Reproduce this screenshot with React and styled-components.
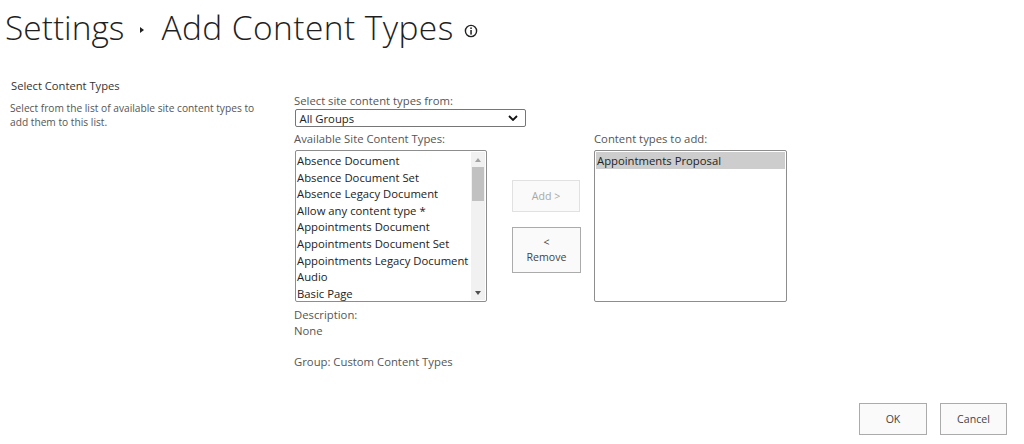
import styled, { createGlobalStyle } from "styled-components";

const GlobalStyle = createGlobalStyle`
  html, body {
    margin: 0;
    padding: 0;
    background: #fff;
  }
  body {
    font-family: 'Open Sans', 'Noto Sans', sans-serif;
  }
`;

const Page = styled.div`
  width: 1024px;
  height: 444px;
  overflow: hidden;
  display: flex;
  flex-direction: column;
  color: #444;
`;

const TitleRow = styled.div`
  height: 60px;
  padding: 0 0 6px 5px;
  box-sizing: border-box;
  display: flex;
  align-items: center;
  font-weight: 300;
  font-size: 33.5px;
  color: #1f1f1f;
  white-space: nowrap;
`;

const TitleLast = styled.span`
  letter-spacing: 0.42px;
`;

const Arrow = styled.span`
  width: 0;
  height: 0;
  margin: 5px 17px 0 16px;
  border-left: 4px solid #222;
  border-top: 3.5px solid transparent;
  border-bottom: 3.5px solid transparent;
`;

const InfoIcon = styled.svg`
  width: 14px;
  height: 14px;
  margin: 8px 0 0 10px;
`;

const FormRow = styled.div`
  flex: 1;
  display: flex;
`;

const Intro = styled.div`
  width: 254px;
  margin-left: 10px;
  padding-top: 18px;
`;

const IntroTitle = styled.div`
  font-size: 11.2px;
  line-height: 15px;
  color: #333;
  padding-left: 1px;
`;

const IntroText = styled.div`
  margin-top: 8px;
  font-size: 10.2px;
  line-height: 14px;
  color: #555;
  white-space: nowrap;
`;

const Fields = styled.div`
  width: 493px;
  margin-left: 30px;
  padding-top: 33px;
`;

const Label = styled.div`
  font-size: 11.3px;
  line-height: 16px;
  color: #555;
  white-space: nowrap;
`;

const GroupSelect = styled.div`
  width: 231px;
  height: 18px;
  box-sizing: border-box;
  margin-left: 1px;
  padding: 0 7px 0 3.5px;
  border: 1px solid #767676;
  border-radius: 2px;
  display: flex;
  align-items: center;
  justify-content: space-between;
  font-size: 11.3px;
  color: #222;
`;

const Pickers = styled.div`
  display: flex;
  margin-top: 4px;
`;

const PickerColumn = styled.div`
  width: ${(p) => p.$width}px;
`;

const ListBox = styled.div`
  width: ${(p) => p.$width}px;
  height: 152px;
  box-sizing: border-box;
  margin: 3px 0 0 ${(p) => p.$offset || 0}px;
  padding: 1px;
  display: flex;
  border: 1px solid #8d8d8d;
  border-radius: 2px;
  overflow: hidden;
`;

const Items = styled.div`
  flex: 1;
  min-width: 0;
`;

const Item = styled.div`
  height: 16.6px;
  line-height: 17.4px;
  padding-left: ${(p) => (p.$selected ? 1 : 0)}px;
  font-size: 11.3px;
  color: #222;
  white-space: nowrap;
  background: ${(p) => (p.$selected ? "#cdcdcd" : "transparent")};
`;

const Scrollbar = styled.div`
  width: 14px;
  background: #f1f1f1;
  display: flex;
  flex-direction: column;
  align-items: center;
`;

const ScrollArrow = styled.div`
  height: 15px;
  display: flex;
  align-items: center;
  justify-content: center;
  &::before {
    content: "";
    border-left: 3.5px solid transparent;
    border-right: 3.5px solid transparent;
    ${(p) => (p.$down ? "border-top: 4px solid #505050;" : "border-bottom: 4px solid #a3a3a3;")}
  }
`;

const ScrollThumb = styled.div`
  width: 12px;
  height: 34px;
  background: #c1c1c1;
`;

const ScrollSpace = styled.div`
  flex: 1;
`;

const Movers = styled.div`
  width: 107px;
  padding-left: 25px;
  box-sizing: border-box;
  display: flex;
  flex-direction: column;
  padding-top: 49px;
  gap: 15px;
`;

const Button = styled.button`
  box-sizing: border-box;
  width: ${(p) => p.$width || 68}px;
  height: ${(p) => p.$height || 32}px;
  padding: 0;
  background: #fafafa;
  border: 1px solid ${(p) => (p.disabled ? "#e1e1e1" : "#ababab")};
  font-family: inherit;
  font-size: 10.6px;
  line-height: 15px;
  color: ${(p) => (p.disabled ? "#a8a8a8" : "#444")};
`;

const Details = styled.div`
  margin-top: 5px;
`;

const DetailLine = styled(Label)`
  margin-bottom: ${(p) => p.$gap || 0}px;
`;

const Footer = styled.div`
  display: flex;
  justify-content: flex-end;
  gap: 13px;
  padding: 0 17px 9px 0;
`;

const available = [
  "Absence Document",
  "Absence Document Set",
  "Absence Legacy Document",
  "Allow any content type *",
  "Appointments Document",
  "Appointments Document Set",
  "Appointments Legacy Document",
  "Audio",
  "Basic Page",
];

const App = () => {
  return (
    <Page>
      <GlobalStyle />
      <TitleRow>
        Settings
        <Arrow />
        <TitleLast>Add Content Types</TitleLast>
        <InfoIcon viewBox="0 0 14 14" fill="none">
          <circle cx="7" cy="7" r="5.6" stroke="#222" strokeWidth="1.4" />
          <rect x="6.3" y="3.4" width="1.5" height="1.6" fill="#222" />
          <rect x="6.3" y="6" width="1.5" height="4.6" fill="#222" />
        </InfoIcon>
      </TitleRow>
      <FormRow>
        <Intro>
          <IntroTitle>Select Content Types</IntroTitle>
          <IntroText>
            Select from the list of available site content types to
            <br />
            add them to this list.
          </IntroText>
        </Intro>
        <Fields>
          <Label>Select site content types from:</Label>
          <GroupSelect>
            All Groups
            <svg width="10" height="6" viewBox="0 0 10 6" fill="none">
              <path d="M1 1l4 4 4-4" stroke="#111" strokeWidth="1.8" />
            </svg>
          </GroupSelect>
          <Pickers>
            <PickerColumn $width={193}>
              <Label>Available Site Content Types:</Label>
              <ListBox $width={192} $offset={1}>
                <Items>
                  {available.map((name) => (
                    <Item key={name}>{name}</Item>
                  ))}
                </Items>
                <Scrollbar>
                  <ScrollArrow />
                  <ScrollThumb />
                  <ScrollSpace />
                  <ScrollArrow $down />
                </Scrollbar>
              </ListBox>
              <Details>
                <DetailLine>Description:</DetailLine>
                <DetailLine $gap={15}>None</DetailLine>
                <DetailLine>Group: Custom Content Types</DetailLine>
              </Details>
            </PickerColumn>
            <Movers>
              <Button disabled>Add &gt;</Button>
              <Button $width={69} $height={46}>
                &lt;
                <br />
                Remove
              </Button>
            </Movers>
            <PickerColumn $width={193}>
              <Label>Content types to add:</Label>
              <ListBox $width={193}>
                <Items>
                  <Item $selected>Appointments Proposal</Item>
                </Items>
              </ListBox>
            </PickerColumn>
          </Pickers>
        </Fields>
      </FormRow>
      <Footer>
        <Button>OK</Button>
        <Button $width={67}>Cancel</Button>
      </Footer>
    </Page>
  );
};

export default App;
